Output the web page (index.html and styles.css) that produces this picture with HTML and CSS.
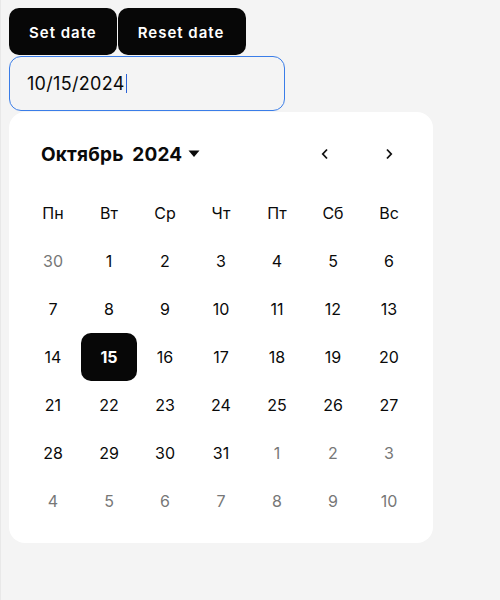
FILE: index.html
```html
<!DOCTYPE html>
<html lang="ru">
<head>
<meta charset="utf-8">
<link rel="stylesheet" href="styles.css">
</head>
<body>
<div class="actions">
  <button class="btn">Set date</button><button class="btn">Reset date</button>
</div>
<div class="field"><span class="value">10/15/2024</span><span class="caret"></span></div>
<div class="calendar">
  <div class="cal-head">
    <div class="title">Октябрь 2024
      <svg class="tri" width="12" height="8" viewBox="0 0 12 8"><path d="M0.5 0.5h11L6 7z" fill="#0a0a0a"/></svg>
    </div>
    <div class="nav">
      <span class="navbtn"><svg width="10" height="12" viewBox="0 0 10 12"><path d="M7 1.5L2.8 6L7 10.5" fill="none" stroke="#111" stroke-width="1.8"/></svg></span>
      <span class="navbtn"><svg width="10" height="12" viewBox="0 0 10 12"><path d="M3 1.5L7.2 6L3 10.5" fill="none" stroke="#111" stroke-width="1.8"/></svg></span>
    </div>
  </div>
  <div class="grid">
    <div class="wd">Пн</div><div class="wd">Вт</div><div class="wd">Ср</div><div class="wd">Чт</div><div class="wd">Пт</div><div class="wd">Сб</div><div class="wd">Вс</div>
    <div class="d out">30</div><div class="d">1</div><div class="d">2</div><div class="d">3</div><div class="d">4</div><div class="d">5</div><div class="d">6</div>
    <div class="d">7</div><div class="d">8</div><div class="d">9</div><div class="d">10</div><div class="d">11</div><div class="d">12</div><div class="d">13</div>
    <div class="d">14</div><div class="d sel">15</div><div class="d">16</div><div class="d">17</div><div class="d">18</div><div class="d">19</div><div class="d">20</div>
    <div class="d">21</div><div class="d">22</div><div class="d">23</div><div class="d">24</div><div class="d">25</div><div class="d">26</div><div class="d">27</div>
    <div class="d">28</div><div class="d">29</div><div class="d">30</div><div class="d">31</div><div class="d out">1</div><div class="d out">2</div><div class="d out">3</div>
    <div class="d out">4</div><div class="d out">5</div><div class="d out">6</div><div class="d out">7</div><div class="d out">8</div><div class="d out">9</div><div class="d out">10</div>
  </div>
</div>
</body>
</html>
```
FILE: styles.css
```css
html {
  background: #f4f4f4;
  min-height: 100%;
  box-shadow: inset 1px 0 0 #e8e8e8;
}
body {
  margin: 8px 9px;
  font-family: Inter, "Open Sans", sans-serif;
  color: #0a0a0a;
}
.actions { display: flex; }
.btn {
  height: 47px;
  padding: 1px 20px 0;
  background: #070707;
  color: #fff;
  border: none;
  border-radius: 10px;
  font-family: Inter, sans-serif;
  font-size: 15px;
  font-weight: 600;
  letter-spacing: 1px;
  margin-right: 1px;
}
.btn + .btn { padding-right: 22px; }
.field {
  box-sizing: border-box;
  width: 276px;
  height: 55px;
  margin-top: 1px;
  border: 1px solid #3a7de8;
  border-radius: 12px;
  display: flex;
  align-items: center;
  padding-left: 17px;
  font-size: 18px;
  letter-spacing: 0.3px;
}
.caret {
  display: inline-block;
  width: 1px;
  height: 19px;
  background: #2a62d8;
  margin-left: 1px;
}
.calendar {
  box-sizing: border-box;
  width: 424px;
  background: #fff;
  border-radius: 16px;
  padding: 16px 16px 18px;
  margin-top: 1px;
}
.cal-head {
  height: 52px;
  margin-bottom: 9px;
  display: flex;
  align-items: center;
  justify-content: space-between;
  padding-left: 16px;
}
.title {
  font-size: 19px;
  font-weight: 700;
  letter-spacing: 0.2px;
  word-spacing: 4px;
  display: flex;
  align-items: center;
  gap: 6px;
}
.nav { display: flex; gap: 24px; margin-right: 8px; }
.navbtn {
  width: 40px;
  height: 40px;
  display: flex;
  align-items: center;
  justify-content: center;
}
.grid {
  display: grid;
  grid-template-columns: repeat(7, 56px);
  grid-auto-rows: 48px;
}
.wd, .d {
  display: flex;
  align-items: center;
  justify-content: center;
  font-size: 16px;
}
.out { color: #777; }
.sel {
  background: #070707;
  color: #fff;
  font-weight: 700;
  border-radius: 10px;
}
```
